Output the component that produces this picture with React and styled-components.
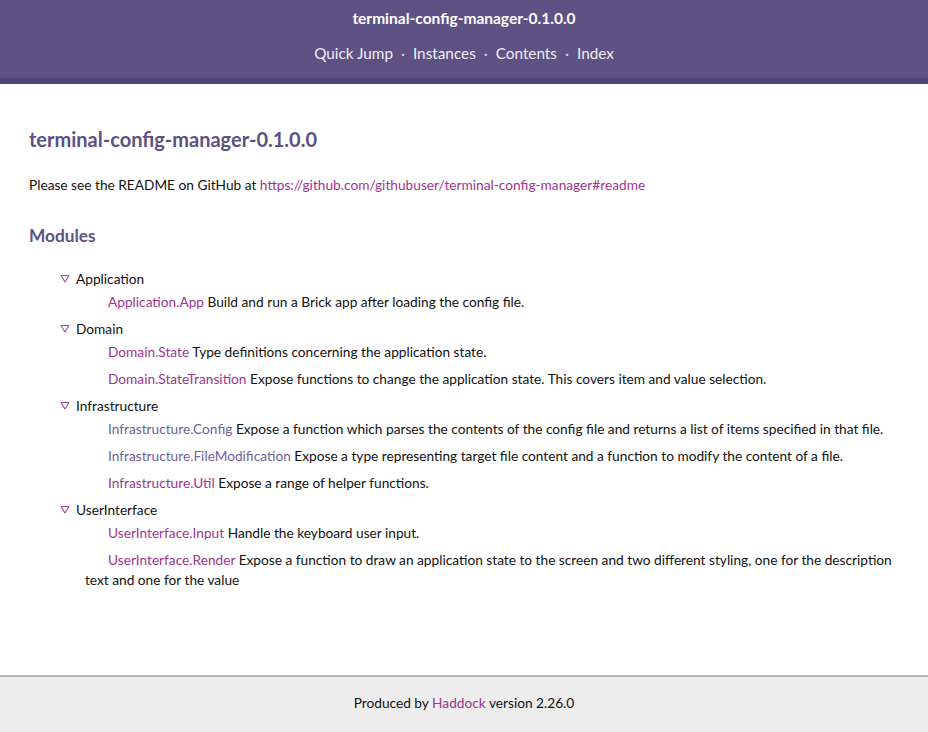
import styled, { createGlobalStyle } from 'styled-components';

const GlobalStyle = createGlobalStyle`
  html, body { margin: 0; padding: 0; background: #fff; }
  body {
    font-family: Lato, "Liberation Sans", sans-serif;
    font-size: 13.7px;
    color: #111;
  }
  #root { min-height: 732px; display: flex; flex-direction: column; }
`;

const modules = [
  {
    name: 'Application',
    items: [
      { mod: 'Application.App', desc: 'Build and run a Brick app after loading the config file.' },
    ],
  },
  {
    name: 'Domain',
    items: [
      { mod: 'Domain.State', desc: 'Type definitions concerning the application state.' },
      { mod: 'Domain.StateTransition', desc: 'Expose functions to change the application state. This covers item and value selection.' },
    ],
  },
  {
    name: 'Infrastructure',
    items: [
      { mod: 'Infrastructure.Config', visited: true, desc: 'Expose a function which parses the contents of the config file and returns a list of items specified in that file.' },
      { mod: 'Infrastructure.FileModification', visited: true, desc: 'Expose a type representing target file content and a function to modify the content of a file.' },
      { mod: 'Infrastructure.Util', desc: 'Expose a range of helper functions.' },
    ],
  },
  {
    name: 'UserInterface',
    items: [
      { mod: 'UserInterface.Input', desc: 'Handle the keyboard user input.' },
      { mod: 'UserInterface.Render', desc: 'Expose a function to draw an application state to the screen and two different styling, one for the description text and one for the value' },
    ],
  },
];

// collapse arrow next to each module group
const Triangle = () => (
  <svg width="10" height="9" viewBox="0 0 10 9">
    <polygon points="1,1.5 9,1.5 5,8" fill="none" stroke="#a0509a" strokeWidth="1.1" strokeLinejoin="round" />
  </svg>
);

function App() {
  return (
    <>
      <GlobalStyle />
      <Header>
        <PackageTitle>terminal-config-manager-0.1.0.0</PackageTitle>
        <Nav>
          <NavLink>Quick Jump</NavLink>
          <Dot>·</Dot>
          <NavLink>Instances</NavLink>
          <Dot>·</Dot>
          <NavLink>Contents</NavLink>
          <Dot>·</Dot>
          <NavLink>Index</NavLink>
        </Nav>
      </Header>

      <Content>
        <Title>terminal-config-manager-0.1.0.0</Title>
        <Description>
          Please see the README on GitHub at{' '}
          <Link href="#">https://github.com/githubuser/terminal-config-manager#readme</Link>
        </Description>

        <SectionTitle>Modules</SectionTitle>
        <Tree>
          {modules.map((group) => (
            <Group key={group.name}>
              <GroupHead>
                <Toggle><Triangle /></Toggle>
                {group.name}
              </GroupHead>
              {group.items.map((item) => (
                <Entry key={item.mod}>
                  <Link href="#" $visited={item.visited}>{item.mod}</Link> {item.desc}
                </Entry>
              ))}
            </Group>
          ))}
        </Tree>
      </Content>

      <Footer>
        Produced by <Link href="#">Haddock</Link> version 2.26.0
      </Footer>
    </>
  );
}

const Header = styled.header`
  background: #5e5184;
  border-bottom: 6px solid #4f4574;
  padding: 8px 0 15px;
  text-align: center;
  color: #fff;
`;

const PackageTitle = styled.div`
  font-weight: 700;
  font-size: 15.5px;
  line-height: 20px;
`;

const Nav = styled.nav`
  margin-top: 15px;
  display: flex;
  justify-content: center;
  gap: 8px;
  font-size: 15.3px;
  line-height: 20px;
  color: #f0eef6;
`;

const NavLink = styled.span``;

const Dot = styled.span`
  color: #d8d3e6;
`;

const Content = styled.main`
  flex: 1;
  padding: 40px 29px 40px;
`;

const Title = styled.h1`
  margin: 0;
  font-size: 20px;
  line-height: 30px;
  font-weight: 700;
  color: #5e5184;
`;

const Description = styled.p`
  margin: 21px 0 0;
  line-height: 20px;
`;

const Link = styled.a`
  color: ${(p) => (p.$visited ? '#6f5f9c' : '#9e358f')};
  text-decoration: none;
`;

const SectionTitle = styled.h2`
  margin: 29px 0 0;
  font-size: 17.3px;
  line-height: 24px;
  font-weight: 700;
  color: #5e5184;
`;

const Tree = styled.div`
  margin-top: 21px;
  padding-left: 31px;
`;

const Group = styled.div`
  margin-bottom: 6px;
`;

const GroupHead = styled.div`
  display: flex;
  align-items: center;
  line-height: 20px;
`;

const Toggle = styled.span`
  display: flex;
  width: 16px;
  margin-top: -2px;
`;

const Entry = styled.div`
  margin: 3px 0 7px;
  padding-left: 25px;
  text-indent: 23px;
  line-height: 20px;
`;

const Footer = styled.footer`
  background: #ededed;
  border-top: 2px solid #b5b5b5;
  text-align: center;
  padding: 16px 0 19px;
  line-height: 20px;
`;

export default App;
